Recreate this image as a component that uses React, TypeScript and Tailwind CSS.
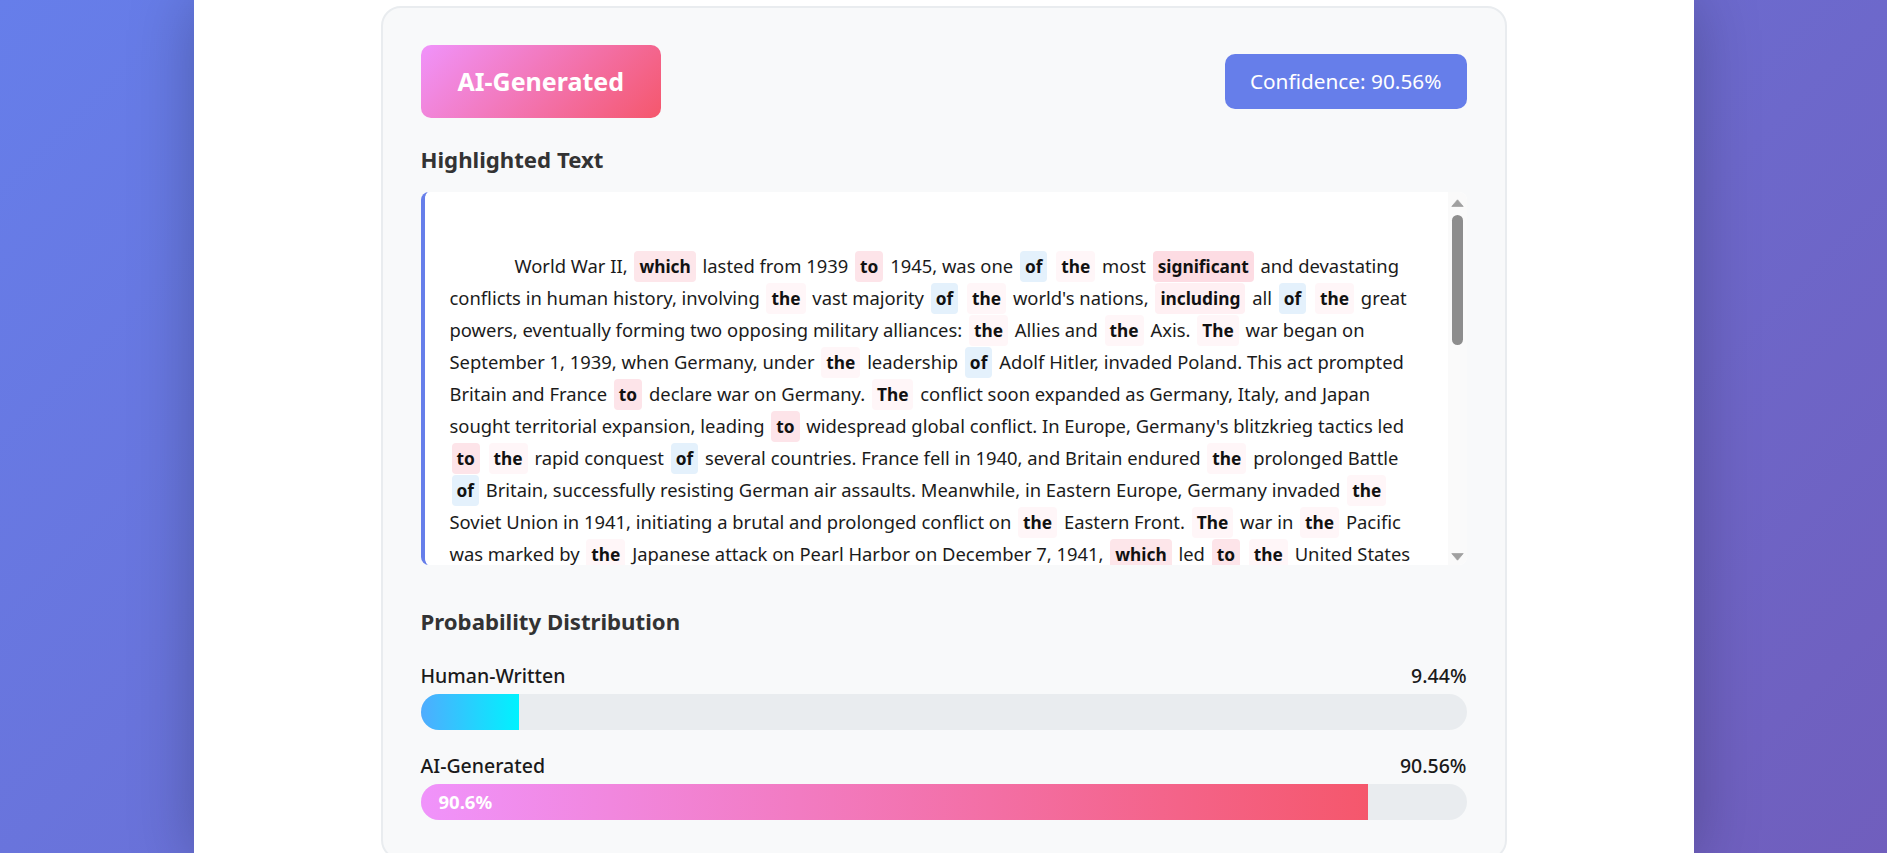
import React from "react";

const hl: Record<string, string> = {
  which: "bg-[#fde6ea]",
  to: "bg-[#fde4e9]",
  significant: "bg-[#fddce3]",
  including: "bg-[#fff0f3]",
  the: "bg-[#fff6f8]",
  of: "bg-[#e4f1fc]",
};

const lines = [
  "World War II, [which] lasted from 1939 [to] 1945, was one [of] [the] most [significant] and devastating",
  "conflicts in human history, involving [the] vast majority [of] [the] world's nations, [including] all [of] [the] great",
  "powers, eventually forming two opposing military alliances: [the] Allies and [the] Axis. [The] war began on",
  "September 1, 1939, when Germany, under [the] leadership [of] Adolf Hitler, invaded Poland. This act prompted",
  "Britain and France [to] declare war on Germany. [The] conflict soon expanded as Germany, Italy, and Japan",
  "sought territorial expansion, leading [to] widespread global conflict. In Europe, Germany's blitzkrieg tactics led",
  "[to] [the] rapid conquest [of] several countries. France fell in 1940, and Britain endured [the] prolonged Battle",
  "[of] Britain, successfully resisting German air assaults. Meanwhile, in Eastern Europe, Germany invaded [the]",
  "Soviet Union in 1941, initiating a brutal and prolonged conflict on [the] Eastern Front. [The] war in [the] Pacific",
  "was marked by [the] Japanese attack on Pearl Harbor on December 7, 1941, [which] led [to] [the] United States",
];

const rest =
  "entering the war. The conflict became truly global, with battles fought across Europe, Africa, Asia, and the Pacific Ocean. In 1942 and 1943, the tide began to turn against the Axis powers. The Soviet victory at Stalingrad marked a major turning point on the Eastern Front, while Allied forces defeated German and Italian troops in North Africa. In the Pacific, the Battle of Midway in June 1942 crippled the Japanese navy and halted its advance. The Allies then launched an island-hopping campaign, gradually pushing Japanese forces back toward their home islands. In Europe, the Allied invasion of Italy in 1943 led to the fall of Mussolini's government. On June 6, 1944, known as D-Day, Allied forces landed on the beaches of Normandy in France, opening a second front in Western Europe. Over the following months, the Allies liberated France and advanced toward Germany, while the Soviet Union pushed from the east. The war also witnessed the Holocaust, the systematic genocide of six million Jews along with millions of other victims by Nazi Germany. Facing defeat on all sides, Hitler died by suicide in April 1945, and Germany surrendered unconditionally on May 8, 1945. In the Pacific, the war continued until the United States dropped atomic bombs on the Japanese cities of Hiroshima and Nagasaki in August 1945. Japan announced its surrender on August 15, 1945, and formally signed the surrender documents on September 2, 1945, bringing the war to an end. World War II resulted in an estimated 70 to 85 million deaths, making it the deadliest conflict in human history. Its aftermath reshaped the global political landscape, leading to the establishment of the United Nations, the beginning of the Cold War between the United States and the Soviet Union, and the decolonization of many nations across Asia and Africa.";

function renderLine(line: string) {
  const parts = line.split(/(\[[^\]]+\])/);
  return parts.map((p, i) => {
    if (p.startsWith("[") && p.endsWith("]")) {
      const w = p.slice(1, -1);
      const c = hl[w.toLowerCase()] ?? "bg-[#fff6f8]";
      return (
        <span
          key={i}
          className={`${c} font-bold text-[17.3px] leading-none text-[#111] px-[5px] py-[4px] mx-[2px] rounded-[4px]`}
        >
          {w}
        </span>
      );
    }
    return <React.Fragment key={i}>{p}</React.Fragment>;
  });
}

function Bar({
  label,
  value,
  pct,
  fill,
  inner,
}: {
  label: string;
  value: string;
  pct: number;
  fill: string;
  inner?: string;
}) {
  return (
    <div>
      <div className="flex justify-between items-center text-[19.5px] leading-[28px] font-medium text-[#1a1a1a] mb-[4px]">
        <span>{label}</span>
        <span>{value}</span>
      </div>
      <div className="h-[36px] rounded-full bg-[#e9ecef] overflow-hidden">
        <div
          className={`h-full flex items-center pl-[18px] text-white font-bold text-[18.5px] ${fill}`}
          style={{ width: `${pct}%` }}
        >
          {inner}
        </div>
      </div>
    </div>
  );
}

export default function App() {
  return (
    <div className="min-h-screen bg-[linear-gradient(135deg,#667eea_0%,#764ba2_100%)] bg-[length:100%_2500px] bg-no-repeat bg-[#764ba2] font-['Noto_Sans',sans-serif]">
      <div className="w-[1500px] mx-auto bg-white min-h-screen pt-[6px] shadow-[0_0_60px_rgba(0,0,0,0.25)]">
        <div className="w-[1126px] mx-auto bg-[#f8f9fa] border-2 border-[#e9ecef] rounded-[20px] p-[38px] pt-[37px]">
          <div className="flex items-center justify-between">
            <div className="rounded-[10px] bg-[linear-gradient(135deg,#f093fb_0%,#f5576c_100%)] text-white font-bold text-[25px] leading-[37px] py-[18px] px-[37px]">
              AI-Generated
            </div>
            <div className="rounded-[10px] bg-[#667eea] text-white text-[20.8px] leading-[31px] py-[12px] px-[25px]">
              Confidence: 90.56%
            </div>
          </div>

          <h3 className="mt-[27px] mb-[17px] text-[22.2px] leading-[30px] font-bold text-[#333]">
            Highlighted Text
          </h3>

          <div className="relative">
            <div className="h-[373px] overflow-y-auto overflow-x-hidden bg-white border-l-4 border-[#667eea] rounded-[8px] pl-[25px] pr-[44px] pt-[26px] pb-[25px] text-[18.4px] leading-[32px] text-[#1b1b1b] [scrollbar-width:none]">
              <div className="h-[32px]" />
              {lines.map((l, i) => (
                <div key={i} className="whitespace-nowrap">
                  {i === 0 && <span className="inline-block w-[65px]" />}
                  {renderLine(l)}
                </div>
              ))}
              <div>{rest}</div>
            </div>
            <div className="absolute right-0 top-0 bottom-0 w-[19px] bg-[#fafafa] rounded-r-[8px]">
              <svg
                className="absolute right-[3px] top-[7px]"
                width="13"
                height="8"
                viewBox="0 0 13 8"
              >
                <path
                  d="M6.5 0.8 L12.2 7.4 L0.8 7.4 Z"
                  fill="#a0a0a0"
                  stroke="#a0a0a0"
                  strokeWidth="0.8"
                  strokeLinejoin="round"
                />
              </svg>
              <div className="absolute right-[4px] top-[23px] w-[11px] h-[130px] rounded-full bg-[#8d8d8d]" />
              <svg
                className="absolute right-[3px] bottom-[4px]"
                width="13"
                height="8"
                viewBox="0 0 13 8"
              >
                <path
                  d="M0.8 0.6 L12.2 0.6 L6.5 7.2 Z"
                  fill="#a0a0a0"
                  stroke="#a0a0a0"
                  strokeWidth="0.8"
                  strokeLinejoin="round"
                />
              </svg>
            </div>
          </div>

          <h3 className="mt-[42px] text-[22.2px] leading-[30px] font-bold text-[#333]">
            Probability Distribution
          </h3>

          <div className="mt-[25px]">
            <Bar
              label="Human-Written"
              value="9.44%"
              pct={9.44}
              fill="bg-[linear-gradient(90deg,#4facfe_0%,#00f2fe_100%)]"
            />
          </div>
          <div className="mt-[22px]">
            <Bar
              label="AI-Generated"
              value="90.56%"
              pct={90.56}
              fill="bg-[linear-gradient(90deg,#f093fb_0%,#f5576c_100%)]"
              inner="90.6%"
            />
          </div>
        </div>
      </div>
    </div>
  );
}
